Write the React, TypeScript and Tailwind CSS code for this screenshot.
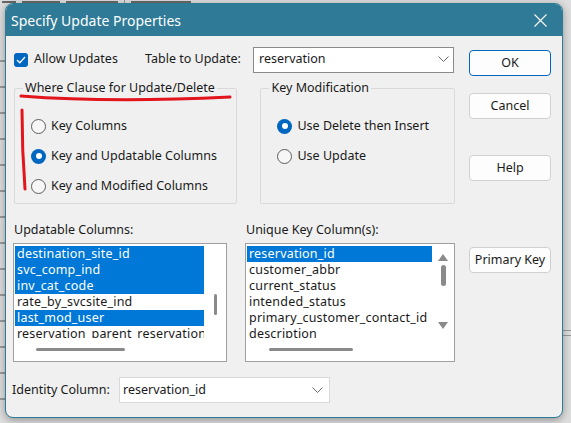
import { ReactNode } from 'react'

const font = "font-['Noto_Sans',_'Open_Sans',_sans-serif]"

function Chevron() {
  return (
    <svg width="11" height="7" viewBox="0 0 11 7" className="shrink-0">
      <polyline points="0.5,0.5 5.5,5.5 10.5,0.5" fill="none" stroke="#6b6b6b" strokeWidth="1" />
    </svg>
  )
}

function Radio({ checked, label }: { checked?: boolean; label: string }) {
  return (
    <div className="flex h-[16px] items-center gap-[5px]">
      {checked ? (
        <span className="flex h-[15px] w-[15px] items-center justify-center rounded-full bg-[#0067c0]">
          <span className="h-[6px] w-[6px] rounded-full bg-white" />
        </span>
      ) : (
        <span className="h-[15px] w-[15px] rounded-full border border-[#5d5d5d] bg-[#f7f7f7]" />
      )}
      <span>{label}</span>
    </div>
  )
}

function Group({ title, width, children }: { title: string; width: string; children: ReactNode }) {
  return (
    <fieldset className={`h-[124px] ${width} rounded-[2px] border border-[#d9d9d9]`}>
      <legend className="ml-[8px] h-[16px] px-[2px] leading-[16px]">{title}</legend>
      <div className="flex flex-col gap-[14px] pl-[16px] pt-[22px]">{children}</div>
    </fieldset>
  )
}

function Button({ label, primary }: { label: string; primary?: boolean }) {
  return (
    <div
      className={`flex h-[26px] w-[82px] items-center justify-center rounded-[4px] bg-[#fdfdfd] ${
        primary ? 'border border-[#0067c0]' : 'border border-[#d0d0d0]'
      }`}
    >
      {label}
    </div>
  )
}

function ListBox({
  items,
  selected,
  width,
  arrows,
  thumb,
}: {
  items: string[]
  selected: number[]
  width: string
  arrows?: boolean
  thumb: string
}) {
  return (
    <div className={`flex h-[119px] ${width} flex-col border border-[#a0a0a0] bg-white tracking-[0.2px]`}>
      <div className="flex h-[94px] overflow-hidden">
        <div className="flex-1 overflow-hidden pl-[1px] pt-[2px]">
          {items.map((it, i) => (
            <div
              key={it}
              className={`h-[16px] whitespace-nowrap pl-[2px] leading-[16px] ${
                selected.includes(i) ? 'bg-[#0078d7] text-white' : ''
              }`}
            >
              {it}
            </div>
          ))}
        </div>
        <div className="flex w-[22px] flex-col items-center">
          {arrows ? (
            <>
              <svg width="10" height="7" viewBox="0 0 10 7" className="mt-[10px]">
                <polygon points="5,0 10,7 0,7" fill="#8a8a8a" />
              </svg>
              <span className="mt-[4px] h-[21px] w-[5px] rounded-full bg-[#8a8a8a]" />
              <svg width="10" height="7" viewBox="0 0 10 7" className="mt-[36px]">
                <polygon points="0,0 10,0 5,7" fill="#8a8a8a" />
              </svg>
            </>
          ) : (
            <span className="mt-[50px] h-[21px] w-[3px] rounded-full bg-[#8a8a8a]" />
          )}
        </div>
      </div>
      <div className="flex h-[23px] items-center">
        <span className={`h-[3px] rounded-full bg-[#8a8a8a] ${thumb}`} />
      </div>
    </div>
  )
}

export default function App() {
  return (
    <div className={`relative h-[423px] w-[571px] overflow-hidden bg-[#dedede] text-[12.5px] text-[#1a1a1a] ${font}`}>
      {/* window behind the dialog */}
      <div className="absolute left-0 top-0 flex h-[3px] w-[571px] items-end gap-[6px] pl-[2px]">
        <span className="h-[2px] w-[14px] bg-[#6a6a6a]" />
        <span className="h-[2px] w-[38px] bg-[#6a6a6a]" />
        <span className="h-[2px] w-[52px] bg-[#6a6a6a]" />
        <span className="h-[3px] w-[1px] bg-[#9a9a9a]" />
        <span className="h-[2px] w-[60px] bg-[#6a6a6a]" />
      </div>
      <div className="absolute left-0 top-[60px] flex w-[5px] flex-col gap-[24px]">
        {Array.from({ length: 14 }).map((_, i) => (
          <span key={i} className="h-[2px] bg-[#9a9a9a]" />
        ))}
      </div>
      <div className="absolute right-0 top-[330px] flex w-[8px] flex-col gap-[4px]">
        <span className="h-[1px] bg-[#9a9a9a]" />
        <span className="h-[1px] bg-[#9a9a9a]" />
      </div>

      {/* dialog window */}
      <div className="absolute left-[5px] top-[3px] flex h-[415px] w-[558px] flex-col overflow-hidden rounded-[8px] border border-[#2e7a97] bg-[#f0f0f0] shadow-[0_2px_8px_rgba(0,0,0,0.35)]">
        <div className="flex h-[32px] shrink-0 items-center justify-between bg-[#2e7a97] pl-[5px] pr-[15px] text-[14px] text-white">
          <span>Specify Update Properties</span>
          <svg width="13" height="13" viewBox="0 0 13 13">
            <path d="M0.5 0.5 L12.5 12.5 M12.5 0.5 L0.5 12.5" stroke="white" strokeWidth="1.1" />
          </svg>
        </div>

        <div className="flex flex-1">
          <div className="flex w-[449px] flex-col pl-[6px]">
            <div className="mt-[11px] flex h-[25px] items-center">
              <div className="ml-[2px] flex w-[131px] items-center gap-[6px]">
                <span className="flex h-[14px] w-[14px] items-center justify-center rounded-[3px] bg-[#0067c0]">
                  <svg width="10" height="8" viewBox="0 0 10 8">
                    <polyline points="1,4 3.8,6.8 9,1" fill="none" stroke="white" strokeWidth="1.3" />
                  </svg>
                </span>
                <span>Allow Updates</span>
              </div>
              <span className="w-[108px]">Table to Update:</span>
              <div className="flex h-[26px] w-[201px] items-center justify-between border border-[#8a8a8a] bg-white pl-[5px] pr-[4px]">
                <span>reservation</span>
                <Chevron />
              </div>
            </div>

            <div className="mt-[8px] flex gap-[23px] pl-[2px]">
              <Group title="Where Clause for Update/Delete" width="w-[224px]">
                <Radio label="Key Columns" />
                <Radio label="Key and Updatable Columns" checked />
                <Radio label="Key and Modified Columns" />
              </Group>
              <Group title="Key Modification" width="w-[195px]">
                <Radio label="Use Delete then Insert" checked />
                <Radio label="Use Update" />
              </Group>
            </div>

            <div className="mt-[18px] flex h-[16px] items-center leading-[16px]">
              <span className="ml-[2px] w-[232px]">Updatable Columns:</span>
              <span>Unique Key Column(s):</span>
            </div>

            <div className="mt-[5px] flex gap-[18px] pl-[1px]">
              <ListBox
                width="w-[214px]"
                items={[
                  'destination_site_id',
                  'svc_comp_ind',
                  'inv_cat_code',
                  'rate_by_svcsite_ind',
                  'last_mod_user',
                  'reservation_parent_reservation_id',
                ]}
                selected={[0, 1, 2, 4]}
                thumb="ml-[22px] w-[89px]"
              />
              <ListBox
                width="w-[210px]"
                items={[
                  'reservation_id',
                  'customer_abbr',
                  'current_status',
                  'intended_status',
                  'primary_customer_contact_id',
                  'description',
                ]}
                selected={[0]}
                arrows
                thumb="ml-[23px] w-[84px]"
              />
            </div>

            <div className="mt-[15px] flex h-[26px] items-center">
              <span className="w-[107px]">Identity Column:</span>
              <div className="flex h-[26px] w-[211px] items-center justify-between border border-[#d9d9d9] bg-white pl-[3px] pr-[6px]">
                <span>reservation_id</span>
                <Chevron />
              </div>
            </div>
          </div>

          <div className="ml-[14px] flex flex-col pt-[14px]">
            <Button label="OK" primary />
            <div className="mt-[17px]">
              <Button label="Cancel" />
            </div>
            <div className="mt-[36px]">
              <Button label="Help" />
            </div>
            <div className="mt-[66px]">
              <Button label="Primary Key" />
            </div>
          </div>
        </div>
      </div>

      {/* red annotation marks */}
      <svg className="pointer-events-none absolute left-0 top-0" width="571" height="423">
        <path d="M21 96 Q 110 103 230 97" fill="none" stroke="#e3141c" strokeWidth="3" strokeLinecap="round" />
        <path d="M22 110 Q 22 150 25 189" fill="none" stroke="#e3141c" strokeWidth="3" strokeLinecap="round" />
      </svg>
    </div>
  )
}
